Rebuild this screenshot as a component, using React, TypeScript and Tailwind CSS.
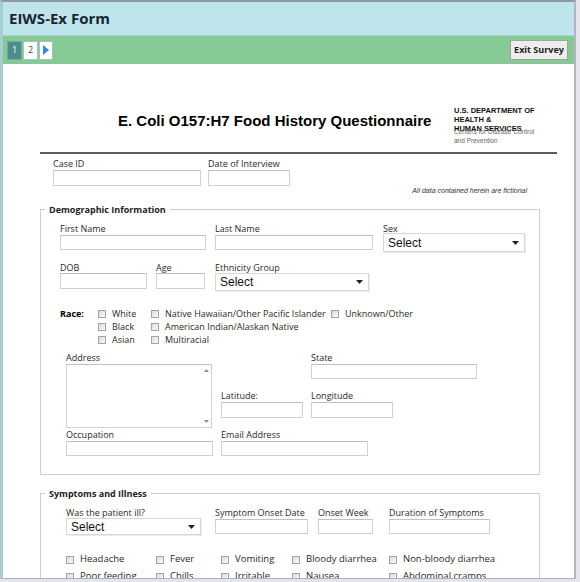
import React from "react";

const ui = "font-['Open_Sans','Noto_Sans',sans-serif]";
const arial = "font-['Liberation_Sans',Arial,sans-serif]";

const Label = ({ children }: { children: React.ReactNode }) => (
  <div className={`${ui} text-[9px] leading-[11px] text-[#2a2a2a] whitespace-nowrap`}>{children}</div>
);

const Input = ({ w, h = "h-[15px]", className = "" }: { w: string; h?: string; className?: string }) => (
  <div className={`${w} ${h} ${className} border border-[#cfd0d8] border-t-[#bfc0c8] bg-white`} />
);

const Select = ({ w, h = "h-[18px]", className = "" }: { w: string; h?: string; className?: string }) => (
  <div
    className={`${w} ${h} ${className} flex items-center justify-between border border-[#d6d6dc] bg-white pl-[4px] pr-[5px] shadow-[1px_1px_0_#ececf0]`}
  >
    <span className={`${arial} text-[12px] leading-none text-[#111]`}>Select</span>
    <svg width="7" height="4" viewBox="0 0 7 4">
      <path d="M0 0h7L3.5 4z" fill="#222" />
    </svg>
  </div>
);

const Box = () => (
  <span className="inline-block w-[8px] h-[8px] shrink-0 border border-[#a4a4a8] bg-gradient-to-br from-[#dcdcdc] to-[#fafafa]" />
);

const Check = ({ label, size = "text-[9px]" }: { label: string; size?: string }) => (
  <div className="flex items-center gap-[6px] whitespace-nowrap">
    <Box />
    <span className={`${ui} ${size} text-[#2a2a2a]`}>{label}</span>
  </div>
);

const Field = ({ label, children, className = "" }: { label: string; children: React.ReactNode; className?: string }) => (
  <div className={`flex flex-col ${className}`}>
    <Label>{label}</Label>
    {children}
  </div>
);

export default function App() {
  return (
    <div className="w-[580px] h-[582px] bg-[#e4e4ec] overflow-hidden">
      <div className="w-[576px] h-[579px] flex flex-col border-t-2 border-t-[#8e999e] border-l-[3px] border-l-[#a3cfcf] border-r-2 border-r-[#b4b4bc] border-b border-b-[#b0b0b8] bg-white">
        {/* header */}
        <div className="h-[34px] shrink-0 bg-[#bde5eb] flex items-center pl-[6px] border-b border-[#a8d4d8]">
          <span className={`${ui} text-[15px] font-bold text-[#1a2630] leading-none`}>EIWS-Ex Form</span>
        </div>

        {/* pager bar */}
        <div className="h-[28px] shrink-0 bg-[#86c994] flex items-center justify-between pl-[4px] pr-[6px]">
          <div className="flex items-center gap-[1px]">
            <div className={`${ui} w-[15px] h-[19px] bg-[#4c8e88] text-white text-[9px] flex items-center justify-center border border-[#6fa9a2]`}>1</div>
            <div className={`${ui} w-[15px] h-[19px] bg-white text-[#444] text-[9px] flex items-center justify-center border border-[#9fc9b2]`}>2</div>
            <div className="w-[14px] h-[19px] bg-white flex items-center justify-center border border-[#9fc9b2]">
              <svg width="6" height="10" viewBox="0 0 6 10">
                <path d="M0 0l6 5-6 5z" fill="#3b86dd" />
              </svg>
            </div>
          </div>
          <div className={`${ui} h-[20px] w-[58px] flex items-center justify-center bg-[#ededed] border border-[#9aa4a0] text-[9px] font-bold text-[#222]`}>
            Exit Survey
          </div>
        </div>

        {/* content */}
        <div className="flex-1 overflow-hidden">
          {/* title block */}
          <div className="ml-[37px] w-[517px] h-[90px] border-b-2 border-[#5c5c5c] flex">
            <div className={`${arial} ml-[78px] mt-[48px] w-[336px] text-[15px] leading-[18px] font-bold text-black whitespace-nowrap`}>
              E. Coli O157:H7 Food History Questionnaire
            </div>
            <div className={`${arial} mt-[42px] whitespace-nowrap`}>
              <div className="text-[7.5px] leading-[9px] font-bold text-[#111]">
                U.S. DEPARTMENT OF
                <br />
                HEALTH &amp;
                <br />
                HUMAN SERVICES
              </div>
              <div className="-mt-[6px] text-[6.5px] leading-[9px] text-[#666]">
                Centers for Disease Control
                <br />
                and Prevention
              </div>
            </div>
          </div>

          {/* case row */}
          <div className="mt-[4px] ml-[50px] flex">
            <Field label="Case ID" className="w-[155px]">
              <Input w="w-[148px]" h="h-[16px]" className="mt-[1px]" />
            </Field>
            <Field label="Date of Interview">
              <Input w="w-[82px]" h="h-[16px]" className="mt-[1px]" />
            </Field>
          </div>
          <div className={`${arial} ml-[37px] w-[487px] text-right italic text-[7px] leading-[9px] text-[#333]`}>
            All data contained herein are fictional
          </div>

          {/* demographic */}
          <fieldset className="mt-[9px] ml-[37px] w-[500px] border border-[#cdcdd5] pb-[18px]">
            <legend className={`${ui} ml-[4px] px-[4px] text-[9px] leading-[11px] font-bold text-[#222]`}>
              Demographic Information
            </legend>
            <div className="pl-[19px] pt-[8px] flex">
              <Field label="First Name" className="w-[155px]">
                <Input w="w-[146px]" className="mt-[1px]" />
              </Field>
              <Field label="Last Name" className="w-[168px]">
                <Input w="w-[158px]" className="mt-[1px]" />
              </Field>
              <Field label="Sex">
                <Select w="w-[142px]" h="h-[19px]" className="-mt-[1px]" />
              </Field>
            </div>
            <div className="pl-[19px] mt-[10px] flex">
              <Field label="DOB" className="w-[96px]">
                <Input w="w-[87px]" h="h-[16px]" />
              </Field>
              <Field label="Age" className="w-[59px]">
                <Input w="w-[49px]" h="h-[16px]" />
              </Field>
              <Field label="Ethnicity Group">
                <Select w="w-[154px]" />
              </Field>
            </div>

            {/* race */}
            <div className="pl-[19px] mt-[16px] flex">
              <div className={`${ui} w-[38px] text-[9px] leading-[13px] font-bold text-black`}>Race:</div>
              <div className="grid grid-cols-[53px_180px_auto] auto-rows-[13px] items-center">
                <Check label="White" />
                <Check label="Native Hawaiian/Other Pacific Islander" />
                <Check label="Unknown/Other" />
                <Check label="Black" />
                <Check label="American Indian/Alaskan Native" />
                <div />
                <Check label="Asian" />
                <Check label="Multiracial" />
                <div />
              </div>
            </div>

            {/* address */}
            <div className="pl-[25px] mt-[6px] flex">
              <Field label="Address" className="w-[155px]">
                <div className="mt-[1px] w-[146px] h-[64px] border border-[#cfd0d8] border-t-[#bfc0c8] bg-white flex justify-end">
                  <div className="w-[10px] h-full flex flex-col items-center justify-between py-[4px]">
                    <svg width="5" height="3" viewBox="0 0 5 3">
                      <path d="M0 3L2.5 0 5 3z" fill="#8a8a8a" />
                    </svg>
                    <svg width="5" height="3" viewBox="0 0 5 3">
                      <path d="M0 0h5L2.5 3z" fill="#8a8a8a" />
                    </svg>
                  </div>
                </div>
              </Field>
              <div className="flex flex-col">
                <Field label="State" className="ml-[90px]">
                  <Input w="w-[166px]" className="mt-[1px]" />
                </Field>
                <div className="mt-[11px] flex">
                  <Field label="Latitude:" className="w-[90px]">
                    <Input w="w-[82px]" h="h-[16px]" className="mt-[1px]" />
                  </Field>
                  <Field label="Longitude">
                    <Input w="w-[82px]" h="h-[16px]" className="mt-[1px]" />
                  </Field>
                </div>
              </div>
            </div>
            <div className="pl-[25px] mt-[1px] flex">
              <Field label="Occupation" className="w-[155px]">
                <Input w="w-[147px]" className="mt-[1px]" />
              </Field>
              <Field label="Email Address">
                <Input w="w-[147px]" className="mt-[1px]" />
              </Field>
            </div>
          </fieldset>

          {/* symptoms */}
          <fieldset className="mt-[13px] ml-[37px] w-[500px] border border-[#cdcdd5] pb-[20px]">
            <legend className={`${ui} ml-[4px] px-[4px] text-[9px] leading-[11px] font-bold text-[#222]`}>
              Symptoms and Illness
            </legend>
            <div className="pl-[25px] pt-[8px] flex">
              <Field label="Was the patient ill?" className="w-[149px]">
                <Select w="w-[135px]" h="h-[17px]" />
              </Field>
              <Field label="Symptom Onset Date" className="w-[103px]">
                <Input w="w-[93px]" className="mt-[1px]" />
              </Field>
              <Field label="Onset Week" className="w-[71px]">
                <Input w="w-[55px]" className="mt-[1px]" />
              </Field>
              <Field label="Duration of Symptoms">
                <Input w="w-[101px]" className="mt-[1px]" />
              </Field>
            </div>
            <div className="pl-[25px] mt-[16px] grid grid-cols-[90px_65px_71px_97px_auto] auto-rows-[17px] items-center">
              <Check label="Headache" size="text-[9.5px]" />
              <Check label="Fever" size="text-[9.5px]" />
              <Check label="Vomiting" size="text-[9.5px]" />
              <Check label="Bloody diarrhea" size="text-[9.5px]" />
              <Check label="Non-bloody diarrhea" size="text-[9.5px]" />
              <Check label="Poor feeding" size="text-[9.5px]" />
              <Check label="Chills" size="text-[9.5px]" />
              <Check label="Irritable" size="text-[9.5px]" />
              <Check label="Nausea" size="text-[9.5px]" />
              <Check label="Abdominal cramps" size="text-[9.5px]" />
            </div>
          </fieldset>
        </div>
      </div>
    </div>
  );
}
